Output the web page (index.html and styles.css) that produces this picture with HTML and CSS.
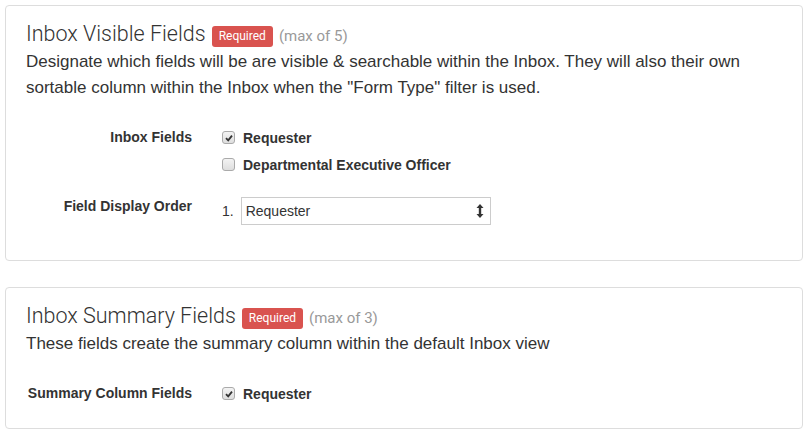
FILE: index.html
```html
<!DOCTYPE html>
<html>
<head>
<meta charset="utf-8">
<link rel="stylesheet" href="styles.css">
</head>
<body>
<div class="panel panel-first">
  <h2 class="title">Inbox Visible Fields <span class="badge">Required</span> <span class="max">(max of 5)</span></h2>
  <p class="desc">Designate which fields will be are visible &amp; searchable within the Inbox. They will also their own sortable column within the Inbox when the "Form Type" filter is used.</p>
  <div class="form">
    <div class="row">
      <div class="label">Inbox Fields</div>
      <div class="field">
        <div class="check-row"><span class="cb checked"><svg viewBox="0 0 10 10" width="10" height="10"><path d="M2 5.2 L4.2 7.4 L8 2.6" fill="none" stroke="#333" stroke-width="1.8"/></svg></span><span class="cb-label">Requester</span></div>
        <div class="check-row"><span class="cb"></span><span class="cb-label">Departmental Executive Officer</span></div>
      </div>
    </div>
    <div class="row row-order">
      <div class="label">Field Display Order</div>
      <div class="field order">
        <span class="num">1.</span>
        <div class="select"><span>Requester</span><svg viewBox="0 0 8 16" width="8" height="16"><path d="M4 1 L7.5 5 H5.2 V11 H7.5 L4 15 L0.5 11 H2.8 V5 H0.5 Z" fill="#333"/></svg></div>
      </div>
    </div>
  </div>
</div>
<div class="panel panel-second">
  <h2 class="title">Inbox Summary Fields <span class="badge">Required</span> <span class="max">(max of 3)</span></h2>
  <p class="desc">These fields create the summary column within the default Inbox view</p>
  <div class="form">
    <div class="row">
      <div class="label">Summary Column Fields</div>
      <div class="field">
        <div class="check-row"><span class="cb checked"><svg viewBox="0 0 10 10" width="10" height="10"><path d="M2 5.2 L4.2 7.4 L8 2.6" fill="none" stroke="#333" stroke-width="1.8"/></svg></span><span class="cb-label">Requester</span></div>
      </div>
    </div>
  </div>
</div>
</body>
</html>
```
FILE: styles.css
```css
html, body {
  margin: 0;
  padding: 0;
  background: #fff;
}
body {
  font-family: "Liberation Sans", Arial, sans-serif;
  color: #333;
  padding: 5px;
}
.panel {
  border: 1px solid #ddd;
  border-radius: 4px;
  padding: 12px 20px 0 20px;
  width: 798px;
  box-sizing: border-box;
}
.panel-first {
  height: 256px;
}
.panel-second {
  margin-top: 26px;
  height: 142px;
}
.title {
  margin: 0;
  font-family: Roboto, sans-serif;
  font-weight: 300;
  font-size: 21.5px;
  line-height: 31px;
  color: #333;
  display: flex;
  align-items: flex-start;
}
.badge {
  display: inline-block;
  background: #d9534f;
  color: #fff;
  font-family: Roboto, sans-serif;
  font-weight: 400;
  font-size: 12px;
  line-height: 21px;
  padding: 0 7px;
  border-radius: 3px;
  margin-left: 6px;
  margin-top: 8px;
}
.max {
  font-family: Roboto, sans-serif;
  font-weight: 400;
  font-size: 15px;
  line-height: 21px;
  color: #999;
  margin-left: 6px;
  margin-top: 8px;
}
.desc {
  margin: 0;
  font-size: 17px;
  line-height: 26px;
  color: #333;
}
.form {
  margin-top: 23px;
}
.row {
  display: flex;
  align-items: flex-start;
}
.label {
  width: 166px;
  text-align: right;
  font-weight: bold;
  font-size: 14px;
  line-height: 27px;
}
.field {
  margin-left: 30px;
}
.check-row {
  display: flex;
  align-items: center;
  height: 27px;
}
.cb {
  width: 11px;
  height: 11px;
  border: 1px solid #aaa;
  border-radius: 3px;
  background: linear-gradient(#f3f3f3, #dedede);
  display: inline-flex;
  align-items: center;
  justify-content: center;
  margin-right: 8px;
}
.cb-label {
  font-weight: bold;
  font-size: 14px;
}
.row-order {
  margin-top: 19px;
}
.row-order .label {
  line-height: 18px;
}
.order {
  display: flex;
  align-items: center;
}
.num {
  font-size: 14px;
  margin-right: 7px;
}
.select {
  width: 250px;
  height: 28px;
  border: 1px solid #ccc;
  box-sizing: border-box;
  display: flex;
  align-items: center;
  justify-content: space-between;
  padding: 0 6px 0 4px;
  font-size: 14px;
}
```
